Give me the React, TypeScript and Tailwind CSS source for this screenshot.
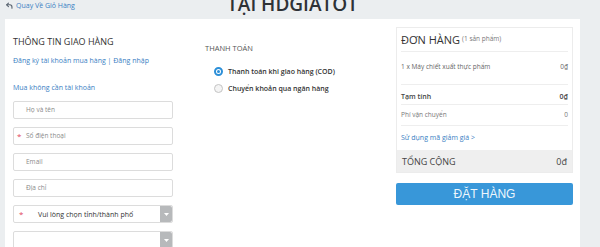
import React from "react";

const blue = "text-[#3a80c3]";

function Field({ placeholder, required }: { placeholder: string; required?: boolean }) {
  return (
    <div className="flex h-[18px] items-center rounded-[2px] border border-[#dcdcdc] bg-white">
      <span className="w-[12px] pl-[3px] text-[8px] leading-none text-[#e0455a]">{required ? "*" : ""}</span>
      <span className="text-[6.5px] leading-none text-[#8a8a8a]">{placeholder}</span>
    </div>
  );
}

function SelectField({ text, required }: { text?: string; required?: boolean }) {
  return (
    <div className="flex h-[18px] items-center rounded-[2px] border border-[#dcdcdc] bg-white">
      <span className="w-[24px] pl-[5px] text-[8px] leading-none text-[#e0455a]">{required ? "*" : ""}</span>
      <span className="flex-1 text-[7px] leading-none text-[#333]">{text}</span>
      <span className="flex h-full w-[12px] items-center justify-center rounded-r-[2px] bg-[#b7b9bb]">
        <svg width="5" height="3" viewBox="0 0 5 3"><path d="M0 0h5L2.5 3z" fill="#fff" /></svg>
      </span>
    </div>
  );
}

function Radio({ checked }: { checked?: boolean }) {
  return checked ? (
    <span className="flex h-[9px] w-[9px] items-center justify-center rounded-full border-[2px] border-[#2c8fd8] bg-white">
      <span className="h-[3px] w-[3px] rounded-full bg-[#2c8fd8]" />
    </span>
  ) : (
    <span className="h-[9px] w-[9px] rounded-full border-[1.5px] border-[#c4c4c4] bg-[#f4f4f4]" />
  );
}

export default function App() {
  return (
    <div className="h-[247px] w-[600px] overflow-hidden bg-[#ebeef0]" style={{ fontFamily: '"Open Sans", sans-serif' }}>
      {/* header */}
      <div className="ml-[5px] grid h-[19px] w-[575px] grid-cols-[1fr_auto_1fr] items-start">
        <div className="flex items-center gap-[3px] pl-[1px] pt-[1px]">
          <svg width="7" height="7" viewBox="0 0 10 10" fill="none" stroke="#5a6470" strokeWidth="1.6" strokeLinecap="round" strokeLinejoin="round">
            <path d="M3.5 1.5 1 4l2.5 2.5" />
            <path d="M1 4h4.5A3 3 0 0 1 8.5 7v2" />
          </svg>
          <span className={`text-[7px] leading-[9px] ${blue}`}>Quay Về Giỏ Hàng</span>
        </div>
        <div className="-mt-[5px] text-[19px] font-semibold leading-[18px] text-[#2e3236]">TẠI HDGIATOT</div>
        <div />
      </div>

      {/* panel */}
      <div className="ml-[5px] flex h-[228px] w-[575px] bg-white pl-[8px]">
        {/* left column */}
        <div className="flex w-[160px] flex-col">
          <div className="mt-[17px] text-[9px] leading-[12px] text-[#333]">THÔNG TIN GIAO HÀNG</div>
          <div className={`mt-[8px] text-[7px] leading-[10px] ${blue}`}>Đăng ký tài khoản mua hàng | Đăng nhập</div>
          <div className="mt-[6px] h-px w-full bg-[#6aaad8]" />
          <div className={`mt-[11px] text-[7px] leading-[10px] ${blue}`}>Mua không cần tài khoản</div>
          <div className="mt-[8px] flex flex-col gap-[8px]">
            <Field placeholder="Họ và tên" />
            <Field placeholder="Số điện thoại" required />
            <Field placeholder="Email" />
            <Field placeholder="Địa chỉ" />
            <SelectField text="Vui lòng chọn tỉnh/thành phố" required />
            <SelectField />
          </div>
        </div>

        {/* middle column */}
        <div className="ml-[32px] flex w-[191px] flex-col">
          <div className="mt-[24px] text-[7.5px] leading-[10px] text-[#555]">THANH TOÁN</div>
          <div className="mt-[12px] flex h-[12px] items-center gap-[5px] pl-[9px]">
            <Radio checked />
            <span className="text-[7px] font-semibold leading-none text-[#333]">Thanh toán khi giao hàng (COD)</span>
          </div>
          <div className="mt-[5px] flex h-[12px] items-center gap-[5px] pl-[9px]">
            <Radio />
            <span className="text-[7px] font-semibold leading-none text-[#333]">Chuyển khoản qua ngân hàng</span>
          </div>
        </div>

        {/* right column */}
        <div className="flex w-[177px] flex-col">
          <div className="mt-[8px] flex flex-col border border-[#ececec]">
            <div className="flex h-[23px] items-center px-[4px]">
              <span className="text-[11px] leading-none text-[#333]">ĐƠN HÀNG</span>
              <span className="ml-[2px] text-[6.5px] leading-none text-[#777]">(1 sản phẩm)</span>
            </div>
            <div className="mx-[4px] h-px bg-[#eeeeee]" />
            <div className="flex h-[32px] items-center justify-between px-[4px] pb-[2px] text-[6.5px] leading-none text-[#666]">
              <span>1 x Máy chiết xuất thực phẩm</span>
              <span>0₫</span>
            </div>
            <div className="mx-[4px] h-px bg-[#eeeeee]" />
            <div className="flex h-[19px] items-center justify-between px-[4px] pt-[4px] text-[7px] font-semibold leading-none text-[#444]">
              <span>Tạm tính</span>
              <span>0₫</span>
            </div>
            <div className="mx-[4px] h-px bg-[#eeeeee]" />
            <div className="flex h-[20px] items-center justify-between px-[4px] pt-[1px] text-[6.5px] leading-none text-[#777]">
              <span>Phí vận chuyển</span>
              <span>0</span>
            </div>
            <div className="mx-[4px] h-px bg-[#eeeeee]" />
            <div className={`flex h-[24px] items-center px-[4px] pb-[2px] text-[7px] leading-none ${blue}`}>
              Sử dụng mã giảm giá &gt;
            </div>
            <div className="flex h-[22px] items-center justify-between bg-[#efefef] px-[5px] text-[9px] leading-none text-[#444]">
              <span>TỔNG CỘNG</span>
              <span>0đ</span>
            </div>
          </div>
          <button
            className="mt-[10px] flex h-[22px] items-center justify-center rounded-[2px] bg-[#3897d9] text-[12px] leading-none text-[#eef6fc]"
            style={{ fontFamily: '"Liberation Sans", Arial, sans-serif' }}
          >
            ĐẶT HÀNG
          </button>
        </div>
      </div>
    </div>
  );
}
